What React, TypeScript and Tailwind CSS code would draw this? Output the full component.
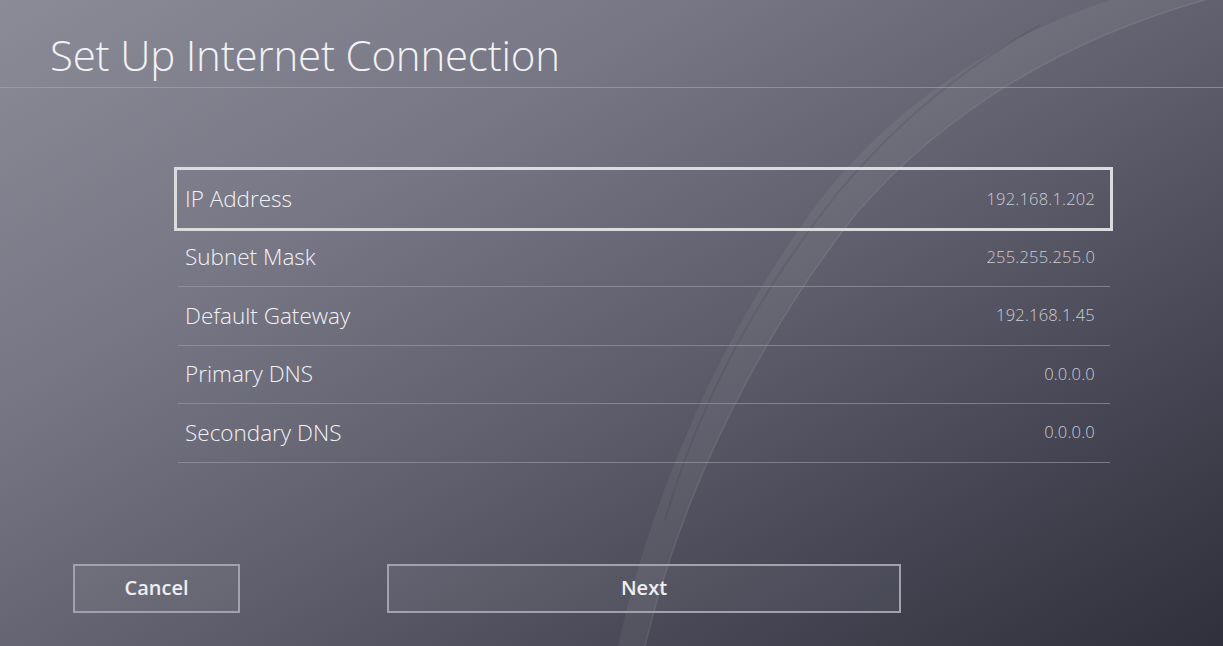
import React from "react";

interface IRow {
  label: string;
  value: string;
}

const rows: IRow[] = [
  { label: "IP Address", value: "192.168.1.202" },
  { label: "Subnet Mask", value: "255.255.255.0" },
  { label: "Default Gateway", value: "192.168.1.45" },
  { label: "Primary DNS", value: "0.0.0.0" },
  { label: "Secondary DNS", value: "0.0.0.0" },
];

const Waves = () => (
  <svg
    className="absolute inset-0 pointer-events-none"
    width="1223"
    height="646"
    viewBox="0 0 1223 646"
  >
    {/* broad light band */}
    <path
      d="M1110 0 C990 40 890 110 820 200 C730 320 655 480 618 646 L645 646 C685 480 765 330 855 215 C945 110 1070 35 1223 -5 Z"
      fill="#ffffff"
      fillOpacity="0.06"
    />
    <path
      d="M1223 -5 C1070 35 945 110 855 215 C765 330 685 480 645 646"
      fill="none"
      stroke="#d0d8e4"
      strokeOpacity="0.12"
      strokeWidth="1.5"
    />
    <path
      d="M1040 25 C960 70 900 120 840 190 C760 290 700 400 665 520"
      fill="none"
      stroke="#2a2a36"
      strokeOpacity="0.12"
      strokeWidth="2"
    />
  </svg>
);

const App = () => {
  return (
    <div
      className="relative w-full h-[646px] overflow-hidden bg-[linear-gradient(150deg,#8b8b98_0%,#767684_30%,#5e5e6c_55%,#454553_78%,#30303c_100%)] text-[#f2f2f4]"
      style={{ fontFamily: '"Open Sans", "Noto Sans", sans-serif' }}
    >
      <Waves />

      <div className="relative h-[88px] border-b border-[#a8a8b4]/60 pl-[50px] pt-[31px]">
        <h1 className="text-[42px] leading-[48px] font-light tracking-[-0.2px]">
          Set Up Internet Connection
        </h1>
      </div>

      <div className="relative ml-[178px] mt-[82px] w-[932px]">
        {rows.map((row, i) => (
          <div
            key={row.label}
            className={
              i === 0
                ? "relative flex items-center justify-between h-[58.5px] pl-[7px] pr-[15px]"
                : "relative flex items-center justify-between h-[58.5px] pl-[7px] pr-[15px] border-b border-[#a0a0ac]/60"
            }
          >
            {i === 0 && (
              <div className="absolute -left-[4px] -right-[3px] -top-[3px] -bottom-[2px] border-[3px] border-[#dcdce0]" />
            )}
            <span className="text-[22.5px] font-light">{row.label}</span>
            <span className="text-[16.5px] font-light text-[#cdcdd4] tracking-[0.2px]">
              {row.value}
            </span>
          </div>
        ))}
      </div>

      <div className="relative flex items-center gap-[147px] pl-[73px] mt-[101px]">
        <button className="w-[167px] h-[49px] border-2 border-[#a2a2ae] bg-white/5 text-[20px] font-semibold text-[#eeeef0]">
          Cancel
        </button>
        <button className="w-[514px] h-[49px] border-2 border-[#a2a2ae] bg-white/5 text-[20px] font-semibold text-[#eeeef0]">
          Next
        </button>
      </div>
    </div>
  );
};

export default App;
